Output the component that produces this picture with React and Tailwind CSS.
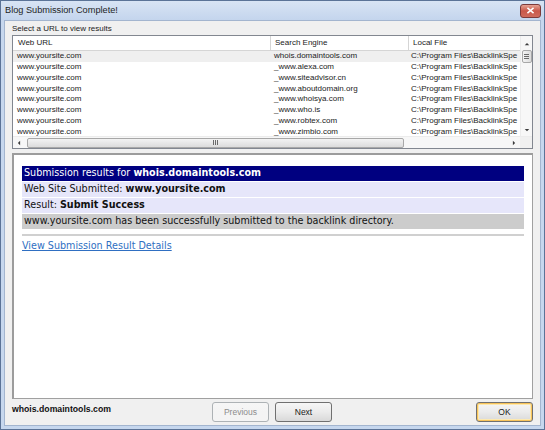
import React from 'react';

const rows = [
  ['www.yoursite.com', 'whois.domaintools.com'],
  ['www.yoursite.com', '_www.alexa.com'],
  ['www.yoursite.com', '_www.siteadvisor.cn'],
  ['www.yoursite.com', '_www.aboutdomain.org'],
  ['www.yoursite.com', '_www.whoisya.com'],
  ['www.yoursite.com', '_www.who.is'],
  ['www.yoursite.com', '_www.robtex.com'],
  ['www.yoursite.com', '_www.zimbio.com'],
];

const Arrow = ({ dir }) => {
  const pts = {
    up: '1,4 4,1 7,4',
    down: '1,1 4,4 7,1',
    left: '4,1 1,4 4,7',
    right: '1,1 4,4 1,7',
  }[dir];
  const vb = dir === 'up' || dir === 'down' ? '0 0 8 5' : '0 0 5 8';
  const size = dir === 'up' || dir === 'down' ? 'w-[6px] h-[4px]' : 'w-[4px] h-[6px]';
  return (
    <svg viewBox={vb} className={size}>
      <polygon points={pts} fill="#3b3b3b" />
    </svg>
  );
};

const Button = ({ children, disabled, primary, className = '' }) => (
  <button
    className={
      'h-[20px] w-[57px] rounded-[3px] border text-[8.5px] leading-none bg-gradient-to-b from-[#f6f6f6] via-[#ebebeb] to-[#d9d9d9] ' +
      (disabled
        ? 'border-[#adb2b5] text-[#8d8d8d] from-[#f4f4f4] to-[#f4f4f4] via-[#f4f4f4] '
        : 'border-[#707070] text-[#1a1a1a] ') +
      (primary ? 'border-[#3c3c3c] shadow-[inset_0_0_0_1px_#f7c35a,inset_0_0_0_2px_#fde9b0] ' : '') +
      className
    }
    style={{ fontFamily: '"Liberation Sans", Arial, sans-serif' }}
  >
    {children}
  </button>
);

export default function App() {
  return (
    <div
      className="w-[545px] h-[430px] flex flex-col bg-[#c6d7ee] border border-[#5b7397] overflow-hidden"
      style={{ fontFamily: '"Liberation Sans", Arial, sans-serif' }}
    >
      {/* title bar */}
      <div className="h-[19px] flex items-center justify-between pl-[4px] pr-[3px] bg-gradient-to-b from-[#d8e4f4] to-[#c4d5ed] shrink-0">
        <span className="text-[9.2px] text-[#1e1e1e]">Blog Submission Complete!</span>
        <div className="w-[21px] h-[14px] rounded-[3px] border border-[#7c3a3a] bg-gradient-to-b from-[#e5a293] via-[#c9574a] to-[#cf6b5c] flex items-center justify-center">
          <svg viewBox="0 0 10 8" className="w-[9px] h-[7px]">
            <path d="M1.5 1 L8.5 7 M8.5 1 L1.5 7" stroke="#fff" strokeWidth="1.8" />
          </svg>
        </div>
      </div>

      {/* client area */}
      <div className="flex-1 mx-[3px] mb-[3px] bg-[#f0f0f0] border border-[#a3b5cf] flex flex-col px-[7px]">
        <div className="text-[8px] leading-[10px] text-[#222] pt-[3px] pb-[1px]">Select a URL to view results</div>

        {/* list view */}
        <div className="h-[114px] border border-[#828790] bg-white flex flex-col">
          <div className="flex flex-1 min-h-0">
            <div className="flex-1 flex flex-col min-w-0">
              <div className="h-[15px] flex border-b border-[#d5d5d5] text-[8px] text-[#222] shrink-0">
                <div className="w-[258px] pl-[5px] flex items-center border-r border-[#d5d5d5]">Web URL</div>
                <div className="w-[138px] pl-[4px] flex items-center border-r border-[#d5d5d5]">Search Engine</div>
                <div className="flex-1 pl-[4px] flex items-center">Local File</div>
              </div>
              {rows.map(([url, engine], i) => (
                <div
                  key={i}
                  className={'h-[10.75px] flex items-center text-[8px] text-[#222] whitespace-nowrap ' + (i === 0 ? 'bg-[#efefef]' : '')}
                >
                  <div className="w-[258px] pl-[4px] overflow-hidden">{url}</div>
                  <div className="w-[138px] pl-[3px] overflow-hidden">{engine}</div>
                  <div className="flex-1 pl-[2px] overflow-hidden">C:\Program Files\BacklinkSpe</div>
                </div>
              ))}
            </div>
            {/* vertical scrollbar */}
            <div className="w-[12px] bg-[#f7f7f7] border-l border-[#ececec] flex flex-col items-center">
              <div className="h-[12px] flex items-center justify-center mt-[2px]"><Arrow dir="up" /></div>
              <div className="w-[10px] h-[13px] rounded-[2px] border border-[#a8a8a8] bg-gradient-to-r from-[#f3f3f3] to-[#dcdcdc] flex flex-col items-center justify-center gap-[1px]">
                <div className="w-[5px] h-px bg-[#6a6a6a]" />
                <div className="w-[5px] h-px bg-[#6a6a6a]" />
                <div className="w-[5px] h-px bg-[#6a6a6a]" />
              </div>
              <div className="flex-1" />
              <div className="h-[12px] flex items-center justify-center"><Arrow dir="down" /></div>
            </div>
          </div>
          {/* horizontal scrollbar */}
          <div className="h-[12px] flex bg-[#f7f7f7] border-t border-[#ececec] shrink-0">
            <div className="w-[12px] flex items-center justify-center"><Arrow dir="left" /></div>
            <div className="flex-1 flex items-center pr-[104px] pl-[2px]">
              <div className="flex-1 h-[10px] rounded-[2px] border border-[#a8a8a8] bg-gradient-to-b from-[#f3f3f3] to-[#dcdcdc] flex items-center justify-center gap-[1px]">
                <div className="w-px h-[5px] bg-[#6a6a6a]" />
                <div className="w-px h-[5px] bg-[#6a6a6a]" />
                <div className="w-px h-[5px] bg-[#6a6a6a]" />
              </div>
            </div>
            <div className="w-[12px] flex items-center justify-center"><Arrow dir="right" /></div>
            <div className="w-[12px] bg-[#f0f0f0]" />
          </div>
        </div>

        {/* results panel */}
        <div
          className="mt-[4px] h-[246px] border border-[#a0a0a0] border-t-2 border-l-2 border-t-[#9c9c9c] border-l-[#9c9c9c] bg-white px-[8px] pt-[11px]"
          style={{ fontFamily: '"DejaVu Sans", Verdana, sans-serif' }}
        >
          <div className="text-[9.6px]">
            <div className="h-[15px] flex items-center bg-[#000080] text-white px-[2px] mb-px">
              Submission results for&nbsp;<b>whois.domaintools.com</b>
            </div>
            <div className="h-[15px] flex items-center bg-[#e6e6fa] text-[#111] px-[2px] mb-px">
              Web Site Submitted:&nbsp;<b>www.yoursite.com</b>
            </div>
            <div className="h-[15px] flex items-center bg-[#e6e6fa] text-[#111] px-[2px] mb-px">
              Result:&nbsp;<b>Submit Success</b>
            </div>
            <div className="h-[15px] flex items-center bg-[#cccccc] text-[#111] px-[2px]">
              www.yoursite.com has been successfully submitted to the backlink directory.
            </div>
          </div>
          <div className="h-[2px] bg-[#d0d0d0] mt-[5px]" />
          <a className="block mt-[3px] text-[9.6px] leading-[14px] text-[#2f6fc2] underline">View Submission Result Details</a>
        </div>

        {/* bottom bar */}
        <div className="flex-1 flex items-center">
          <span className="w-[200px] text-[8.7px] font-bold text-[#111] -mt-[4px]">whois.domaintools.com</span>
          <Button disabled>Previous</Button>
          <Button className="ml-[6px]">Next</Button>
          <div className="flex-1" />
          <Button primary>OK</Button>
        </div>
      </div>
    </div>
  );
}
